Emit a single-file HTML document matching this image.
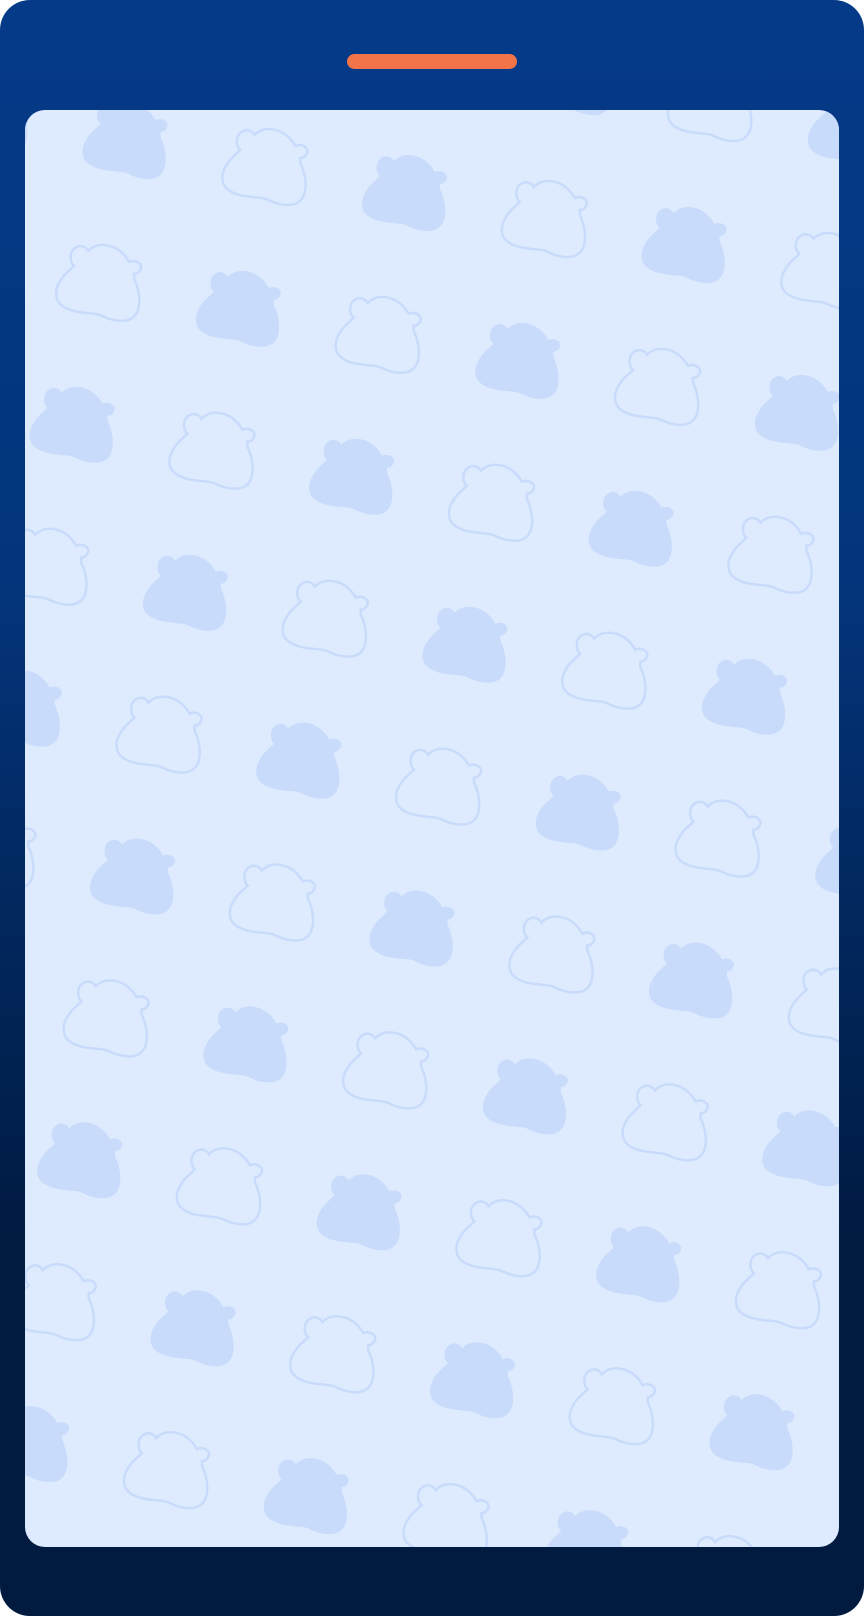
<!DOCTYPE html>
<html><head><meta charset="utf-8"><style>
html,body{margin:0;padding:0;background:#fff;}
body{width:864px;height:1616px;overflow:hidden;}
</style></head><body>
<svg id="svg" width="864" height="1616" viewBox="0 0 864 1616" xmlns="http://www.w3.org/2000/svg">
<defs>
<linearGradient id="g" x1="0" y1="0" x2="0" y2="1">
<stop offset="0" stop-color="#053a89"/>
<stop offset="0.35" stop-color="#04357c"/>
<stop offset="0.78" stop-color="#001a40"/>
<stop offset="1" stop-color="#001a40"/>
</linearGradient>
<clipPath id="c"><rect x="25" y="110" width="814" height="1437" rx="20"/></clipPath>
<path id="s" d="M18,21 C13,17 13,5 21,2 C25,0 30,2 32,6 C36,2 41,0 46,0 C59,0 68,8 73,17 C80,14 86,19 85,23 C84,27 81,29 78,29 L78,34 C82,42 84,52 83,60 C82,70 76,76 66,76 C58,76 52,74 46,71 C40,68 36,69 30,68 C18,67 8,64 3,58 C-1,53 -1,45 3,38 C7,30 13,26 18,21 Z"/>
</defs>
<rect width="864" height="1616" rx="30" fill="url(#g)"/>
<rect x="347" y="54" width="170" height="15" rx="7.5" fill="#f4744a"/>
<rect x="25" y="110" width="814" height="1437" rx="20" fill="#deebff"/>
<g clip-path="url(#c)">
<g id="F" fill="#c8dbfa"></g>
<g id="O" fill="none" stroke="#c8dbfa" stroke-width="2.5"></g>
</g>
</svg>
<script>
(function(){
var NS="http://www.w3.org/2000/svg",F=document.getElementById("F"),O=document.getElementById("O");
function add(p,x,y){var u=document.createElementNS(NS,"use");u.setAttribute("href","#s");u.setAttributeNS("http://www.w3.org/1999/xlink","xlink:href","#s");u.setAttribute("x",x.toFixed(1));u.setAttribute("y",y.toFixed(1));p.appendChild(u);}
for(var j=-3;j<16;j++)for(var i=-10;i<12;i++){
var x=362+279.5*i-166.2*j,y=155+52*i+115.9*j;
if(x>-100&&x<850&&y>20&&y<1560)add(F,x,y);
var ox=x+139.75,oy=y+26;
if(ox>-100&&ox<850&&oy>20&&oy<1560)add(O,ox,oy);
}})();
</script>
</body></html>
